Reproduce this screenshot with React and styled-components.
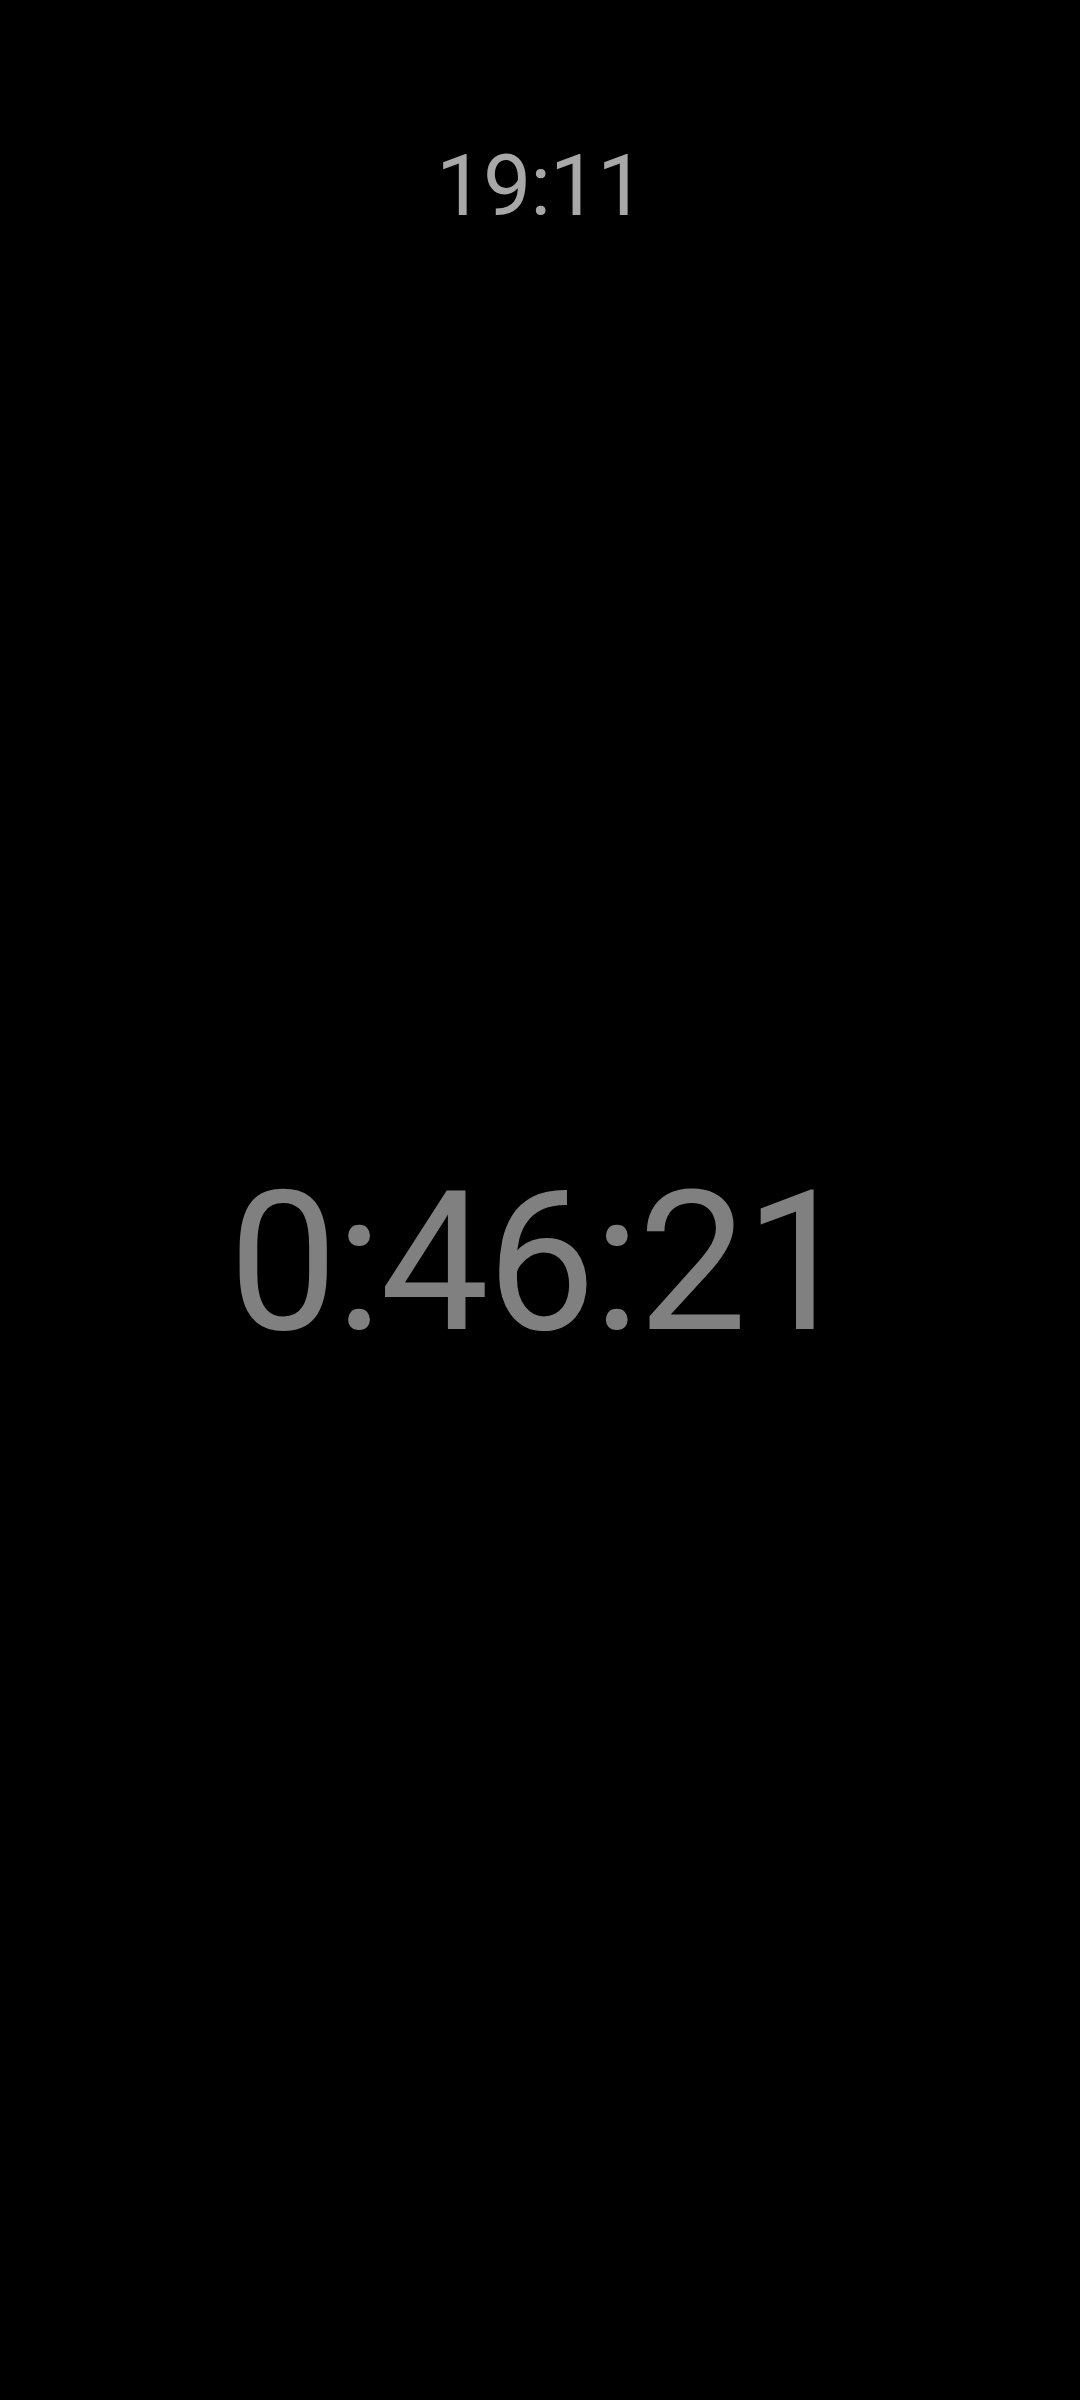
import React from "react";
import styled, { createGlobalStyle } from "styled-components";

const GlobalStyle = createGlobalStyle`
    html, body {
        margin: 0;
        padding: 0;
        background: #000;
    }
    body {
        font-family: Roboto, "Noto Sans", "Liberation Sans", sans-serif;
    }
`;

const Screen = styled.div`
    width: 1080px;
    height: 2400px;
    background: #000;
    display: flex;
    flex-direction: column;
    align-items: center;
    padding-top: 143px;
    box-sizing: border-box;
`;

const Clock = styled.div`
    font-size: 86px;
    line-height: 1;
    color: #a8a8a8;
    letter-spacing: -1.2px;
`;

const Timer = styled.div`
    margin-top: 937px;
    font-size: 194px;
    line-height: 1;
    color: #808080;
    letter-spacing: -2.4px;
`;

const App = () => {
    return (
        <>
            <GlobalStyle />
            <Screen>
                <Clock>19:11</Clock>
                <Timer>0:46:21</Timer>
            </Screen>
        </>
    );
};

export default App;
